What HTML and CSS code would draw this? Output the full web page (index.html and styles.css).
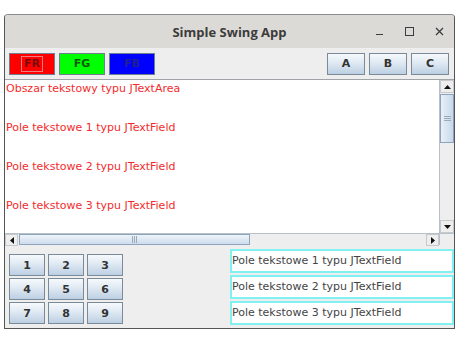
FILE: index.html
```html
<!DOCTYPE html>
<html lang="pl">
<head>
    <meta charset="UTF-8">
    <title>Simple Swing App</title>
    <link rel="stylesheet" href="styles.css">
</head>
<body>
    <div class="window">
        <div class="titlebar">
            <div></div>
            <div class="title">Simple Swing App</div>
            <div class="controls">
                <span class="ctl">
                    <svg width="9" height="9" viewBox="0 0 9 9"><path d="M1 7.5 L8 7.5" stroke="#3c3c3c" stroke-width="1.2"/></svg>
                </span>
                <span class="ctl">
                    <svg width="9" height="9" viewBox="0 0 9 9"><rect x="0.5" y="0.5" width="8" height="8" fill="none" stroke="#3c3c3c" stroke-width="1"/></svg>
                </span>
                <span class="ctl">
                    <svg width="9" height="9" viewBox="0 0 9 9"><path d="M1 1 L8 8 M8 1 L1 8" stroke="#3c3c3c" stroke-width="1.3"/></svg>
                </span>
            </div>
        </div>

        <div class="toolbar">
            <div class="group">
                <button class="color-btn red"><span class="focus">FR</span></button>
                <button class="color-btn green">FG</button>
                <button class="color-btn blue">FB</button>
            </div>
            <div class="group">
                <button class="metal-btn wide">A</button>
                <button class="metal-btn wide">B</button>
                <button class="metal-btn wide">C</button>
            </div>
        </div>

        <div class="scroll-pane">
            <pre class="text-area">Obszar tekstowy typu JTextArea


Pole tekstowe 1 typu JTextField


Pole tekstowe 2 typu JTextField


Pole tekstowe 3 typu JTextField</pre>
            <div class="vbar">
                <div class="arrow">
                    <svg width="7" height="4" viewBox="0 0 7 4"><path d="M0 4 L3.5 0 L7 4 Z" fill="#111"/></svg>
                </div>
                <div class="track">
                    <div class="thumb v-thumb"><span class="grip-h"></span></div>
                </div>
                <div class="arrow">
                    <svg width="7" height="4" viewBox="0 0 7 4"><path d="M0 0 L3.5 4 L7 0 Z" fill="#111"/></svg>
                </div>
            </div>
            <div class="hbar">
                <div class="arrow">
                    <svg width="4" height="7" viewBox="0 0 4 7"><path d="M4 0 L0 3.5 L4 7 Z" fill="#111"/></svg>
                </div>
                <div class="track">
                    <div class="thumb h-thumb"><span class="grip-v"></span></div>
                </div>
                <div class="arrow">
                    <svg width="4" height="7" viewBox="0 0 4 7"><path d="M0 0 L4 3.5 L0 7 Z" fill="#111"/></svg>
                </div>
            </div>
            <div class="corner"></div>
        </div>

        <div class="bottom">
            <div class="keypad">
                <button class="metal-btn">1</button>
                <button class="metal-btn">2</button>
                <button class="metal-btn">3</button>
                <button class="metal-btn">4</button>
                <button class="metal-btn">5</button>
                <button class="metal-btn">6</button>
                <button class="metal-btn">7</button>
                <button class="metal-btn">8</button>
                <button class="metal-btn">9</button>
            </div>
            <div class="fields">
                <div class="field">Pole tekstowe 1 typu JTextField</div>
                <div class="field">Pole tekstowe 2 typu JTextField</div>
                <div class="field">Pole tekstowe 3 typu JTextField</div>
            </div>
        </div>
    </div>
</body>
</html>
```

FILE: styles.css
```css
body {
    margin: 0;
    background-color: #fff;
    font-family: "DejaVu Sans", sans-serif;
}

.window {
    margin: 14px 0 0 4px;
    width: 451px;
    height: 315px;
    box-sizing: border-box;
    border: 1px solid #555;
    border-top-color: #8a8a8a;
    border-radius: 4px 4px 0 0;
    background-color: #eeeeee;
    display: flex;
    flex-direction: column;
    overflow: hidden;
}

.titlebar {
    height: 33px;
    flex: none;
    background-color: #dcdad6;
    display: grid;
    grid-template-columns: 1fr auto 1fr;
    align-items: center;
}

.title {
    font-family: "Open Sans", "DejaVu Sans", sans-serif;
    font-weight: bold;
    font-size: 13px;
    color: #3c3c3c;
}

.controls {
    display: flex;
    justify-content: flex-end;
}

.ctl {
    width: 30px;
    height: 20px;
    display: flex;
    align-items: center;
    justify-content: center;
}

.toolbar {
    height: 32px;
    flex: none;
    box-sizing: border-box;
    padding: 0 5px 0 4px;
    display: flex;
    justify-content: space-between;
    align-items: center;
    border-bottom: 1px solid #a0a4a8;
}

.group {
    display: flex;
    gap: 4px;
}

button {
    font-family: "DejaVu Sans", sans-serif;
    font-weight: bold;
    font-size: 11px;
    padding: 0;
    margin: 0;
    cursor: pointer;
}

.color-btn {
    width: 46px;
    height: 22px;
    border: 1px solid #6f7f90;
    display: flex;
    align-items: center;
    justify-content: center;
}

.red {
    background-color: #ff0000;
    color: #7a0a0a;
}

.red .focus {
    border: 1px solid #f08080;
    padding: 1px 2px;
    line-height: 12px;
}

.green {
    background-color: #00ff00;
    color: #0a5a0a;
}

.blue {
    background-color: #0000ff;
    color: #202090;
}

.metal-btn {
    width: 36px;
    height: 22px;
    border: 1px solid #7a8a99;
    color: #333;
    background: linear-gradient(to bottom, #f6f9fc 0%, #e2ebf4 40%, #bccfe3 100%);
}

.metal-btn.wide {
    width: 38px;
}

.scroll-pane {
    height: 165px;
    flex: none;
    display: grid;
    grid-template-columns: 1fr 15px;
    grid-template-rows: 1fr 12px;
    background-color: #fff;
}

.text-area {
    margin: 0;
    padding: 2px 0 0 1px;
    font-family: "DejaVu Sans", sans-serif;
    font-size: 11px;
    line-height: 13px;
    color: #f22c2c;
    overflow: hidden;
}

.vbar {
    display: flex;
    flex-direction: column;
    background-color: #eeeeee;
    border-left: 1px solid #b8c0c8;
}

.hbar {
    display: flex;
    background-color: #eeeeee;
    border-top: 1px solid #b8c0c8;
}

.arrow {
    flex: none;
    width: 13px;
    height: 12px;
    display: flex;
    align-items: center;
    justify-content: center;
    background-color: #eeeeee;
    border: 1px solid #c4cad0;
    box-sizing: border-box;
}

.vbar .arrow {
    width: 14px;
    height: 13px;
}

.track {
    flex: 1;
    display: flex;
}

.vbar .track {
    flex-direction: column;
    padding-top: 1px;
}

.thumb {
    border: 1px solid #8da3bb;
    background: linear-gradient(to right, #e8f0f8, #c8d8ea);
    box-sizing: border-box;
    display: flex;
    align-items: center;
    justify-content: center;
}

.v-thumb {
    height: 49px;
}

.h-thumb {
    width: 231px;
    margin-left: 1px;
    background: linear-gradient(to bottom, #eef4fa, #cddcec);
}

.grip-h {
    width: 7px;
    height: 5px;
    background: repeating-linear-gradient(to bottom, #9aaabb 0 1px, transparent 1px 2px);
}

.grip-v {
    width: 5px;
    height: 7px;
    background: repeating-linear-gradient(to right, #9aaabb 0 1px, transparent 1px 2px);
}

.corner {
    background-color: #eeeeee;
    border-top: 1px solid #b8c0c8;
    border-left: 1px solid #b8c0c8;
}

.bottom {
    flex: 1;
    display: flex;
    justify-content: space-between;
    align-items: flex-start;
}

.keypad {
    display: grid;
    grid-template-columns: repeat(3, 36px);
    grid-auto-rows: 22px;
    column-gap: 3px;
    row-gap: 2px;
    padding: 9px 0 0 4px;
}

.fields {
    display: flex;
    flex-direction: column;
    gap: 2px;
    padding-top: 4px;
}

.field {
    width: 224px;
    height: 24px;
    box-sizing: border-box;
    border: 2px solid #80f0f0;
    background-color: #fff;
    padding-left: 0;
    font-size: 11px;
    line-height: 20px;
    color: #444;
}
```
